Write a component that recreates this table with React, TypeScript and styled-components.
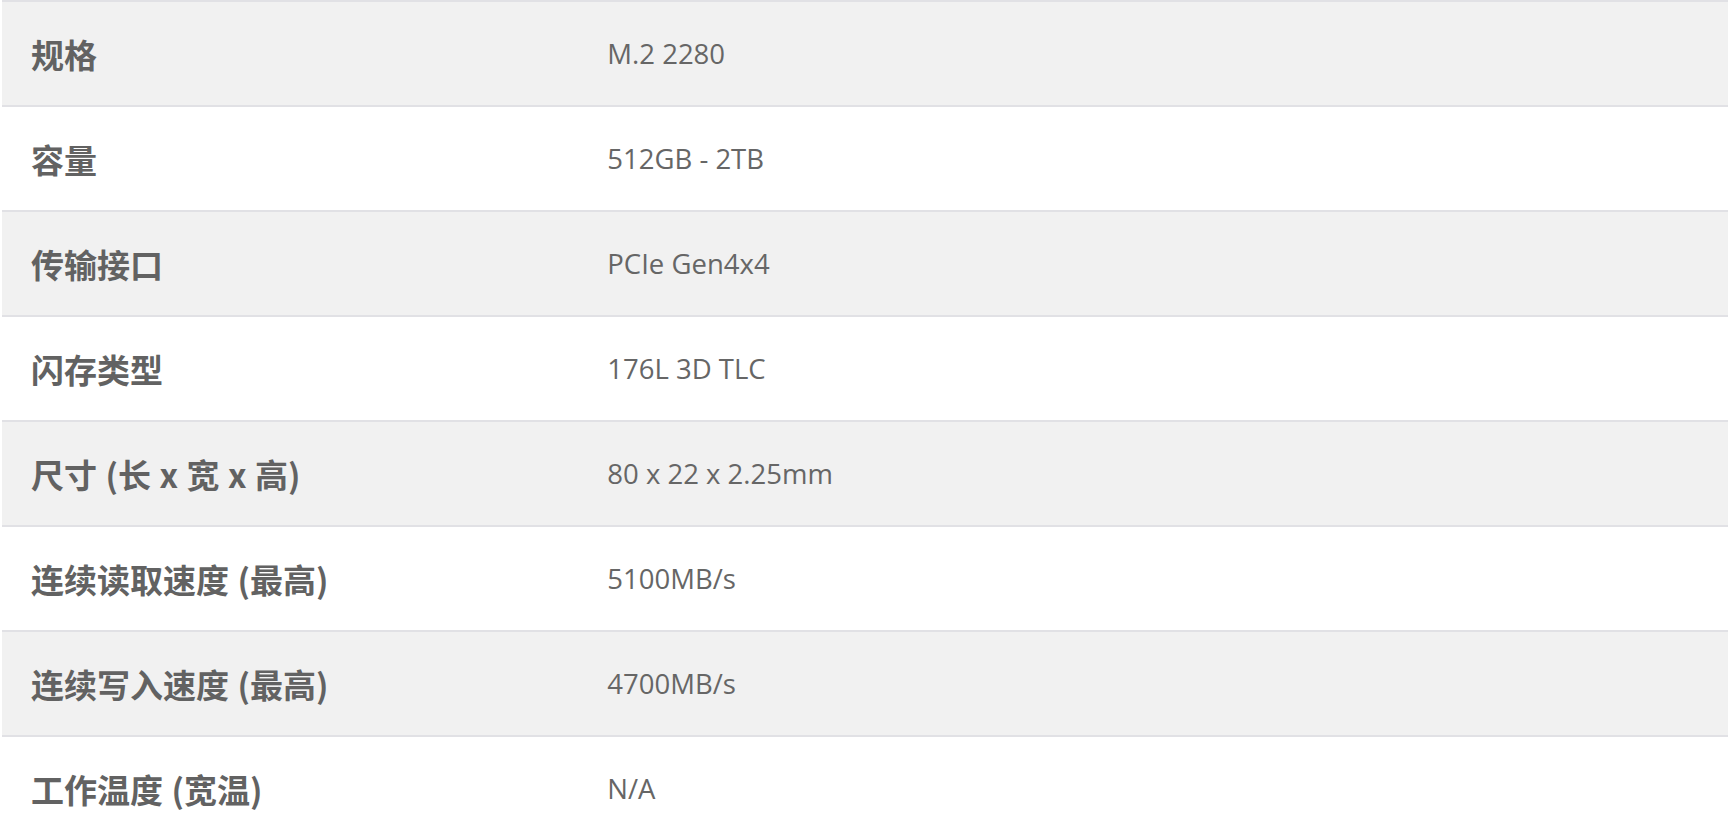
import React from 'react';
import styled, { createGlobalStyle } from 'styled-components';

const GlobalStyle = createGlobalStyle`
  html, body {
    margin: 0;
    padding: 0;
    background: #ffffff;
  }
  body {
    font-family: "Open Sans", "Noto Sans CJK SC", sans-serif;
  }
`;

const Table = styled.div`
  margin-left: 2px;
  width: calc(100% - 2px);
  border-top: 2px solid #e1e1e5;
  display: flex;
  flex-direction: column;
`;

const Row = styled.div<{ $shaded: boolean }>`
  display: grid;
  grid-template-columns: 1fr 2fr;
  height: 103px;
  align-items: center;
  background-color: ${({ $shaded }) => ($shaded ? '#f1f1f1' : '#ffffff')};
  border-bottom: 2px solid #e1e1e5;
`;

const Label = styled.div`
  padding-left: 29px;
  color: #626262;
  font-family: "Noto Sans CJK SC", "Open Sans", sans-serif;
  font-weight: 700;
  font-size: 33px;
  word-spacing: 1px;
`;

const Value = styled.div`
  padding-left: 30px;
  color: #666666;
  font-family: "Open Sans", "Noto Sans CJK SC", sans-serif;
  font-size: 27.5px;
`;

const specs: [string, string][] = [
  ['规格', 'M.2 2280'],
  ['容量', '512GB - 2TB'],
  ['传输接口', 'PCIe Gen4x4'],
  ['闪存类型', '176L 3D TLC'],
  ['尺寸 (长 x 宽 x 高)', '80 x 22 x 2.25mm'],
  ['连续读取速度 (最高)', '5100MB/s'],
  ['连续写入速度 (最高)', '4700MB/s'],
  ['工作温度 (宽温)', 'N/A'],
];

export default function App() {
  return (
    <>
      <GlobalStyle />
      <Table>
        {specs.map(([label, value], i) => (
          <Row key={label} $shaded={i % 2 === 0}>
            <Label>{label}</Label>
            <Value>{value}</Value>
          </Row>
        ))}
      </Table>
    </>
  );
}
